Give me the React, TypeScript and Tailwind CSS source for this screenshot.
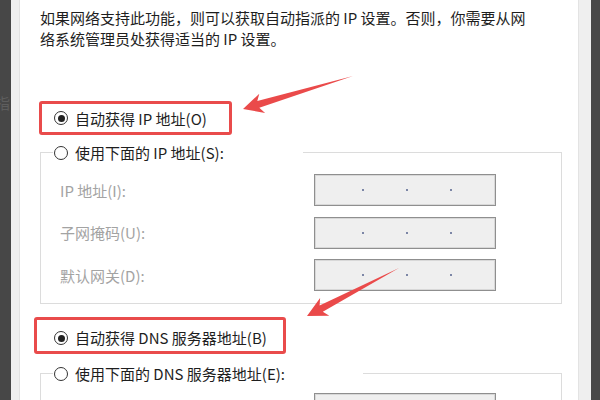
const fields = ['IP 地址(I):', '子网掩码(U):', '默认网关(D):']

function Radio({ checked }: { checked?: boolean }) {
  return (
    <span className="flex h-[14px] w-[14px] shrink-0 items-center justify-center rounded-full border border-[#333] bg-white">
      {checked && <span className="h-[7px] w-[7px] rounded-full bg-[#222]" />}
    </span>
  )
}

function IpBox() {
  return (
    <div className="flex h-[32px] w-[182px] shrink-0 items-center gap-[42px] border border-[#8f8f8f] bg-[#efefef] pl-[47px] shadow-[inset_0_0_0_1px_#d8d8d8]">
      <span className="h-[2px] w-[2px] bg-[#7c86a6]" />
      <span className="h-[2px] w-[2px] bg-[#7c86a6]" />
      <span className="h-[2px] w-[2px] bg-[#7c86a6]" />
    </div>
  )
}

export default function App() {
  return (
    <div className="relative flex h-[400px] w-[600px] overflow-hidden bg-white font-['Noto_Sans_CJK_SC','Noto_Sans',sans-serif] text-[15px] leading-[21px] text-[#1e1e1e]">
      <div className="w-[11px] overflow-hidden bg-[#474747] pt-[92px]">
        <span className="-ml-[5px] block text-[#5e5e5e]">指</span>
      </div>
      <div className="w-[9px] border-r border-[#e3e3e3] bg-[#f0f0f0]" />

      <main className="flex flex-1 flex-col items-start pl-[20px] pt-[7px]">
        <p className="h-[42px]">
          如果网络支持此功能，则可以获取自动指派的 IP 设置。否则，你需要从网
          <br />
          络系统管理员处获得适当的 IP 设置。
        </p>

        <div className="ml-[-1px] mt-[52px] flex h-[34px] w-[193px] shrink-0 items-center gap-[7px] rounded-[3px] border-[3px] border-[#e94b4b] pl-[12px]">
          <Radio checked />
          <span>自动获得 IP 地址(O)</span>
        </div>

        <fieldset className="mt-[7px] w-[522px] shrink-0 border border-[#dcdcdc] pb-[12px]">
          <legend className="ml-[12px] w-[250px] bg-white pl-[1px]">
            <span className="flex items-center gap-[7px]">
              <Radio />
              使用下面的 IP 地址(S):
            </span>
          </legend>
          <div className="mt-[11px] flex flex-col gap-[10.5px]">
            {fields.map((f) => (
              <div key={f} className="flex items-center">
                <span className="w-[273px] pl-[19px] text-[#a3a3a3]">{f}</span>
                <IpBox />
              </div>
            ))}
          </div>
        </fieldset>

        <div className="ml-[-6px] mt-[13px] flex h-[37px] w-[252px] shrink-0 items-start gap-[7px] rounded-[3px] border-[3px] border-[#e94b4b] pl-[17px] pt-[7px]">
          <span className="mt-[4px]">
            <Radio checked />
          </span>
          <span>自动获得 DNS 服务器地址(B)</span>
        </div>

        <fieldset className="mt-[9px] w-[522px] shrink-0 border border-[#dcdcdc] pb-[12px]">
          <legend className="ml-[12px] w-[310px] bg-white pl-[1px]">
            <span className="flex items-center gap-[7px]">
              <Radio />
              使用下面的 DNS 服务器地址(E):
            </span>
          </legend>
          <div className="mt-[9px] flex items-center">
            <span className="w-[273px] pl-[19px]" />
            <IpBox />
          </div>
        </fieldset>
      </main>

      <div className="w-[13px] border-l border-[#e3e3e3] bg-[#efefef]" />
      <div className="w-[9px] bg-[#484848]" />

      <svg className="pointer-events-none absolute inset-0" width="600" height="400" viewBox="0 0 600 400">
        <polygon
          fill="#ea4a4a"
          points="243,109 259.3,93.7 257.3,101 353,76 259.3,107.8 265.1,112.9"
        />
        <polygon
          fill="#ea4a4a"
          points="307,316 320.1,297.9 319.6,305.5 399,268 322.8,311.7 329.3,315.7"
        />
      </svg>
    </div>
  )
}
